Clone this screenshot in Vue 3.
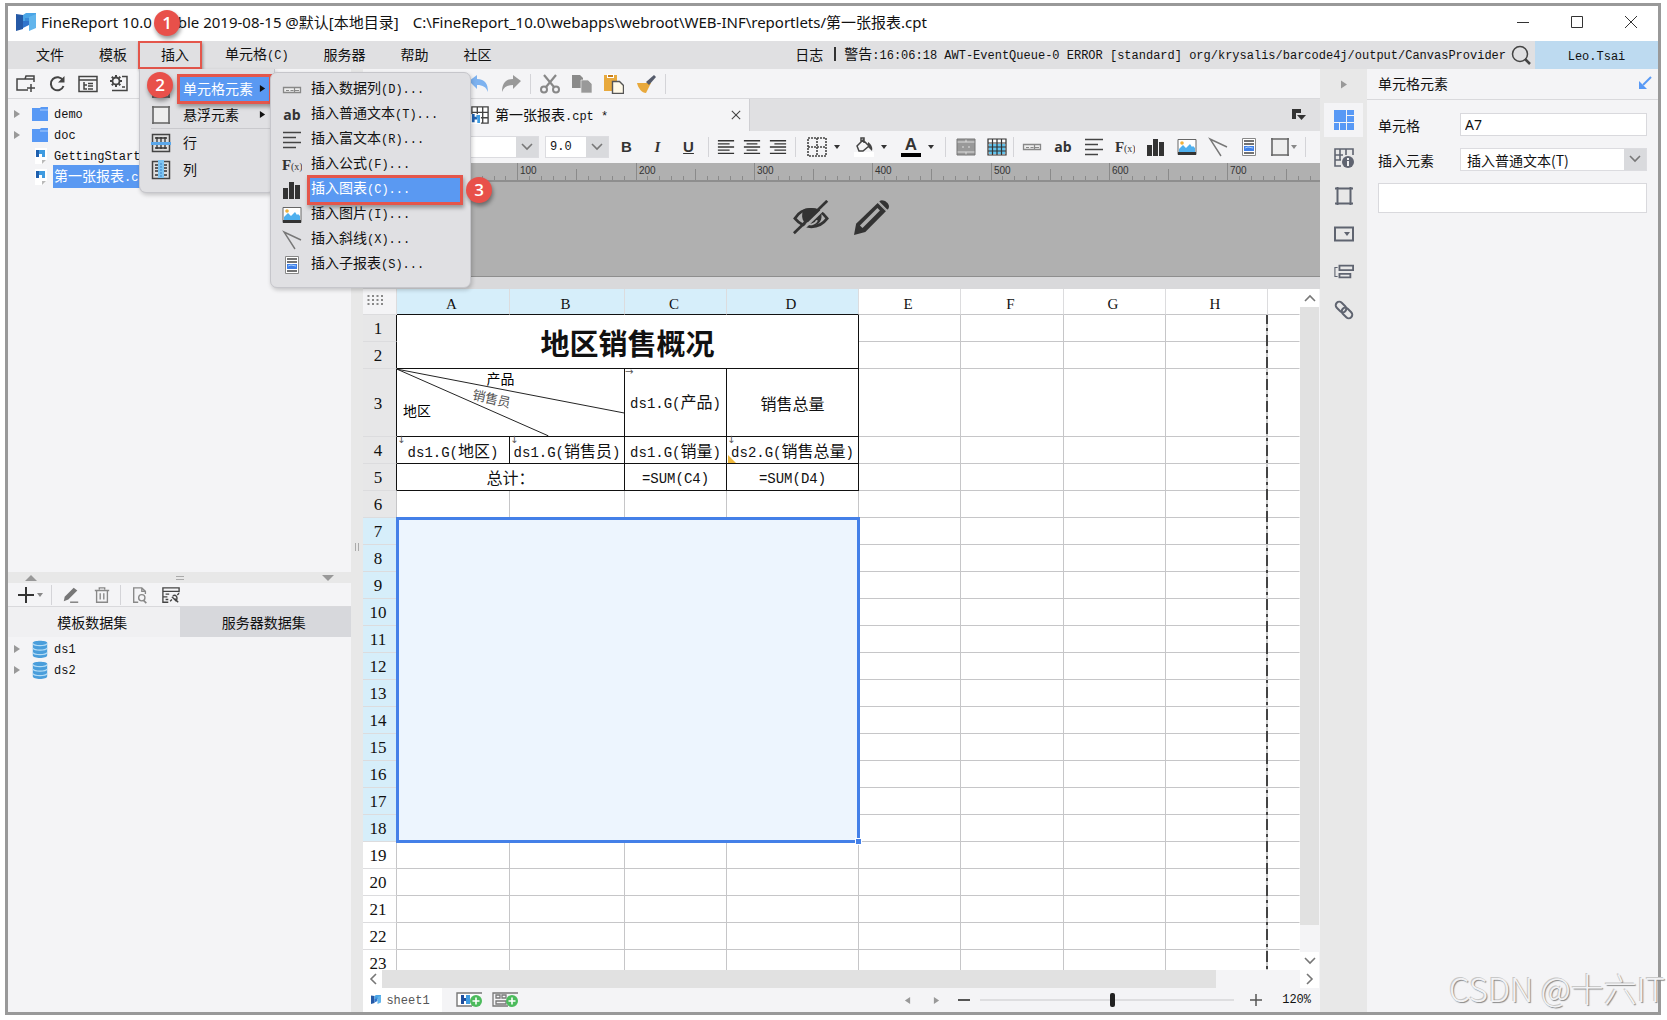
<script setup>
import { h, ref } from 'vue'

// Sets the Latin runs of a mixed label in the monospaced face, one size below the Chinese text
const Mix = (props) =>
  h(
    'span',
    { class: 'mix' },
    props.t.split(/([\x20-\x7e]+)/).filter(Boolean).map((run) =>
      /^[\x20-\x7e]/.test(run) ? h('span', { class: 'lat' }, run) : run
    )
  )
Mix.props = ['t']

const menus = ['文件', '模板', '插入', '单元格(C)', '服务器', '帮助', '社区']

const insertItems = [
  { icon: 'field', t: '插入数据列(D)...' },
  { icon: 'ab', t: '插入普通文本(T)...' },
  { icon: 'rich', t: '插入富文本(R)...' },
  { icon: 'fx', t: '插入公式(F)...' },
  { icon: 'chart', t: '插入图表(C)...', active: true },
  { icon: 'image', t: '插入图片(I)...' },
  { icon: 'slash', t: '插入斜线(X)...' },
  { icon: 'sub', t: '插入子报表(S)...' }
]

const files = [
  { icon: 'folder', t: 'demo', open: true },
  { icon: 'folder', t: 'doc', open: true },
  { icon: 'file', t: 'GettingStarted.cpt' },
  { icon: 'file', t: '第一张报表.cpt', active: true }
]

const columns = ['A', 'B', 'C', 'D', 'E', 'F', 'G', 'H']
const rail = ['cellel', 'cellattr', 'float', 'widget', 'cond', 'link']
const insertTools = ['field', 'ab', 'rich', 'fx', 'chart', 'image', 'slash', 'sub', 'box']

const ruler = []
for (let i = 1; i < 79; i++) {
  const x = Math.round(36 + i * 11.83)
  ruler.push({ x, y: i % 10 === 0 ? 0 : i % 5 === 0 ? 6 : 13, label: i % 10 === 0 ? i * 10 : '' })
}

const zoom = ref(52)
const cell = ref('A7')
const content = ref('')
</script>

<template>
  <svg class="defs" aria-hidden="true">
    <symbol id="logo" viewBox="0 0 20 20">
      <path d="M0 2l7 1v14l-7 2z" fill="#2559a6" />
      <path d="M7 9h6v4l-6 3z" fill="#2f74cc" />
      <path d="M7 3l3-2h10v3l-7 5H7z" fill="#4aa5e6" />
      <path d="M13 5l7-3v14l-7 3z" fill="#62b5ec" />
      <path d="M9 6h4v3H9z" fill="#3a8bd8" />
    </symbol>
    <symbol id="newfolder" viewBox="0 0 20 20">
      <path d="M12 16H1V5h8l1-3h8v6M9 5h9M15 10v8M11 14h8" fill="none" stroke="#444" stroke-width="1.5" />
    </symbol>
    <symbol id="refresh" viewBox="0 0 20 20">
      <path d="M16 6.500A6.500 6.500 0 1 0 16.500 12" fill="none" stroke="#444" stroke-width="2" />
      <path d="M17.500 2v6.500H11z" fill="#444" />
    </symbol>
    <symbol id="tree" viewBox="0 0 20 20">
      <path d="M1 2.500h18v15H1zM1 6h18M6 8v7h3M6 11h3M10 9.500h5M10 12h5M10 15h5" fill="none" stroke="#444" stroke-width="1.500" />
    </symbol>
    <symbol id="gear" viewBox="0 0 20 20">
      <circle cx="7" cy="7" r="3.500" fill="none" stroke="#444" stroke-width="1.800" />
      <path d="M7 1v2M7 11v2M1 7h2M11 7h2M2.800 2.800l1.500 1.500M9.800 9.800l1.500 1.500M2.800 11.200l1.500-1.500M9.800 4.200l1.500-1.500" stroke="#444" stroke-width="2" />
      <path d="M13 2.500h5v14H3M13 13h3" fill="none" stroke="#444" stroke-width="1.500" />
    </symbol>
    <symbol id="folder" viewBox="0 0 18 16">
      <path d="M1 2h8l1-1h7v14H1z" fill="#5899f5" />
      <path d="M9 4h8" stroke="#a9ccfb" />
    </symbol>
    <symbol id="file" viewBox="0 0 18 18">
      <path d="M4 1h12v11l-4 5H4z" fill="#fff" />
      <path d="M5 3h3v7H5z" fill="#1f5fae" />
      <path d="M8 3h6v7h-3V7H8z" fill="#3f9be0" />
      <path d="M11 17v-4h4z" fill="#b9b9b9" />
    </symbol>
    <symbol id="db" viewBox="0 0 18 20">
      <path d="M1 3v14c0 4 16 4 16 0V3c0-3-16-3-16 0z" fill="#4a9edb" />
      <path d="M1 4c2 3 14 3 16 0M1 9c2 3 14 3 16 0M1 14c2 3 14 3 16 0" fill="none" stroke="#b5ddf6" stroke-width="1.200" />
    </symbol>
    <symbol id="field" viewBox="0 0 20 20">
      <path d="M1.500 7.500h17v5h-17z" fill="#eee" stroke="#888" stroke-width="1.300" />
      <path d="M4 10.500h3M8.500 10.500h3M13 10.500h4M12.500 8v4" fill="none" stroke="#888" stroke-width="1.200" />
    </symbol>
    <symbol id="ab" viewBox="0 0 20 20">
      <text x="10" y="15" text-anchor="middle" font-family="Open Sans, sans-serif" font-weight="700" font-size="14" fill="#333">ab</text>
    </symbol>
    <symbol id="rich" viewBox="0 0 20 20">
      <path d="M1 2.500h18M1 7.500h13M1 12.500h18M1 17.500h13" stroke="#444" stroke-width="1.600" />
    </symbol>
    <symbol id="fx" viewBox="0 0 20 20">
      <text x="0" y="15" font-family="Liberation Serif, serif" font-weight="700" font-size="15" fill="#333">F</text>
      <text x="9" y="15" font-family="Liberation Serif, serif" font-size="10" fill="#333">(x)</text>
    </symbol>
    <symbol id="chart" viewBox="0 0 20 20">
      <path d="M1 8h5v11H1zM7 2h5v17H7zM13 5h5v14h-5z" fill="#333" />
    </symbol>
    <symbol id="image" viewBox="0 0 20 20">
      <path d="M1 2.500h18v15H1z" fill="#fff" stroke="#666" />
      <circle cx="5" cy="6" r="1.800" fill="#f0b23c" />
      <path d="M2 15v-3l4-4 3 3 4-4 2 3 1-1 2 2v4z" fill="#4fb0ee" />
      <path d="M1 15h18v3H1z" fill="#333" />
    </symbol>
    <symbol id="slash" viewBox="0 0 20 20">
      <path d="M19 10L2 2l11 17" fill="none" stroke="#777" stroke-width="1.400" />
    </symbol>
    <symbol id="sub" viewBox="0 0 20 20">
      <path d="M3.500 1.500h13v17h-13z" fill="#fff" stroke="#888" />
      <path d="M5 4h10M5 7h10M5 16h10" stroke="#444" stroke-width="1.400" />
      <path d="M5 9h10v5H5z" fill="#3f7fe8" />
      <path d="M6 11l3-1 5 1" stroke="#a9d0fa" fill="none" />
    </symbol>
    <symbol id="box" viewBox="0 0 20 20">
      <path d="M3 3h14v14H3z" fill="#eee" />
      <path d="M2 1v18M18 1v18M1 2h18M1 18h18" stroke="#666" stroke-width="1.600" fill="none" />
    </symbol>
    <symbol id="rowi" viewBox="0 0 20 20">
      <path d="M1.500 1.500h17v17h-17z" fill="#ddd" stroke="#444" stroke-width="1.500" />
      <path d="M4 5h12M4 15h12M6 4v12M10 4v12M14 4v12" stroke="#333" stroke-width="1.300" />
      <path d="M0 9h20v3H0z" fill="#5aa7ea" />
    </symbol>
    <symbol id="coli" viewBox="0 0 20 20">
      <path d="M1.500 1.500h17v17h-17z" fill="#ddd" stroke="#444" stroke-width="1.500" />
      <path d="M4 5h12M4 8h12M4 11h12M4 15h12" stroke="#333" stroke-width="1.300" />
      <path d="M7 0h6v18H7z" fill="#7cc4f2" /><path d="M10 3v14" stroke="#3c82c8" stroke-dasharray="2 1" />
    </symbol>
    <symbol id="undo" viewBox="0 0 20 20">
      <path d="M0 7l8-6v4c8 0 11 5 11 13-2-5-5-7-11-7v4z" fill="#7db2f0" />
    </symbol>
    <symbol id="redo" viewBox="0 0 20 20">
      <path d="M20 7l-8-6v4C4 5 1 10 1 18c2-5 5-7 11-7v4z" fill="#999" />
    </symbol>
    <symbol id="cut" viewBox="0 0 20 20">
      <path d="M4 1l10 12M16 1L6 13" stroke="#888" stroke-width="2.200" />
      <circle cx="4" cy="15.500" r="3" fill="none" stroke="#888" stroke-width="2" />
      <circle cx="16" cy="15.500" r="3" fill="none" stroke="#888" stroke-width="2" />
    </symbol>
    <symbol id="copy" viewBox="0 0 20 20">
      <path d="M0 1h8l3 3v10H0z" fill="#8a8a8a" />
      <path d="M9 6h7l4 4v9H9z" fill="#999" stroke="#eee" stroke-width=".7" />
    </symbol>
    <symbol id="paste" viewBox="0 0 20 20">
      <path d="M0 1h13v16H0z" fill="#e8a93c" /><path d="M3 0h7v4H3z" fill="#fff" /><path d="M4 1h5v2H4z" fill="#c77f1c" />
      <path d="M8.500 7.500h7l4 4v8h-11z" fill="#fff9e8" stroke="#555" stroke-width="1.400" />
    </symbol>
    <symbol id="brush" viewBox="0 0 20 20">
      <path d="M1 9h14l-5 10c-4 0-8-5-9-10z" fill="#e8a93c" />
      <path d="M10 8l8-7 2 2-7 8z" fill="#555b6b" />
    </symbol>
    <symbol id="left" viewBox="0 0 20 20"><path d="M1 3h18M1 6.500h13M1 10h18M1 13.500h13M1 17h18" stroke="#333" stroke-width="1.500" /></symbol>
    <symbol id="center" viewBox="0 0 20 20"><path d="M1 3h18M4 6.500h12M1 10h18M4 13.500h12M1 17h18" stroke="#333" stroke-width="1.500" /></symbol>
    <symbol id="right" viewBox="0 0 20 20"><path d="M1 3h18M6 6.500h13M1 10h18M6 13.500h13M1 17h18" stroke="#333" stroke-width="1.500" /></symbol>
    <symbol id="borders" viewBox="0 0 20 20">
      <path d="M1 1h18v18H1zM10 1v18M1 10h18" fill="none" stroke="#444" stroke-width="1.600" stroke-dasharray="2 1" />
    </symbol>
    <symbol id="fill" viewBox="0 0 20 20">
      <path d="M0 15h20v5H0z" fill="#fff" />
      <path d="M3 9l6-6 6 6-6 5H5zM7 5V1h3v5" fill="none" stroke="#444" stroke-width="1.500" />
      <path d="M14 5c3 2 5 5 4 9l-4-4z" fill="#444" />
    </symbol>
    <symbol id="fontcolor" viewBox="0 0 20 20">
      <path d="M0 16h20v4H0z" fill="#000" />
      <text x="10" y="13" text-anchor="middle" font-family="Liberation Sans, sans-serif" font-weight="700" font-size="17" fill="#333">A</text>
    </symbol>
    <symbol id="merge" viewBox="0 0 20 20">
      <path d="M1 2h18v16H1z" fill="#999" /><path d="M1 5h18M1 15h18M10 1v4M10 15v4" stroke="#ddd" />
      <path d="M1 2h18v16H1z" fill="none" stroke="#777" /><path d="M6 10h2M12 10h2" stroke="#ddd" />
    </symbol>
    <symbol id="unmerge" viewBox="0 0 20 20">
      <path d="M1 2h18v16H1z" fill="#fff" /><path d="M2 7h16v10H2z" fill="#62c4ee" />
      <path d="M1 2h18v16H1zM1 6h18M1 10h18M1 14h18M5.500 2v16M10 2v16M14.500 2v16" fill="none" stroke="#333" stroke-width="1.200" />
    </symbol>
    <symbol id="tabicon" viewBox="0 0 20 20">
      <path d="M1 1h18v18H1zM1 7h18M7 1v18M13 1v18M1 13h18" fill="#fff" stroke="#444" stroke-width="1.500" />
      <path d="M0 9h11v11H0z" fill="#fff" /><path d="M1 9h3v9H1zM4 12h3v3H4z" fill="#1f5fae" /><path d="M6 10h4v9H7v-6H6z" fill="#3f9be0" />
    </symbol>
    <symbol id="tablist" viewBox="0 0 16 14">
      <path d="M1 1h9v4H5v6H1z" fill="#333" /><path d="M6 7h9l-4.500 5z" fill="#333" />
    </symbol>
    <symbol id="eye" viewBox="0 0 40 38">
      <path d="M2 20C10 7 28 7 37 20 28 32 12 32 2 20z" fill="none" stroke="#333" stroke-width="3" />
      <path d="M11 11c-4 11 3 17 9 17 8 0 13-6 10-16-6-4-13-4-19-1z" fill="#333" />
      <path d="M14 24c3 4 10 3 12-2" fill="none" stroke="#b0b0b0" stroke-width="2" />
      <path d="M4 38L40 3" stroke="#b0b0b0" stroke-width="3" /><path d="M1 36L37 1" stroke="#333" stroke-width="3" />
    </symbol>
    <symbol id="bigpen" viewBox="0 0 36 36">
      <path d="M1 35l2-11L24 4l8 8-20 20z" fill="#333" />
      <path d="M26 2c3-3 12 3 8 8l-2 1-7-7z" fill="#333" /><path d="M25 3l8 8" stroke="#b0b0b0" stroke-width="1.500" />
      <path d="M8 27L25 10" stroke="#b0b0b0" stroke-width="3.500" />
    </symbol>
    <symbol id="pen" viewBox="0 0 20 20">
      <path d="M2 17l1-5L13 2l4 3L7 15z" fill="#777" /><path d="M9 18h9" stroke="#777" stroke-width="1.500" />
    </symbol>
    <symbol id="trash" viewBox="0 0 20 20">
      <path d="M2 5h16M7 4V2h6v2M4 5v13h12V5M8 8v7M12 8v7" fill="none" stroke="#888" stroke-width="1.500" />
    </symbol>
    <symbol id="preview" viewBox="0 0 20 20">
      <path d="M8 18H3V2h9l4 4v3M12 2v4h4" fill="none" stroke="#888" stroke-width="1.500" />
      <circle cx="12" cy="13" r="3.500" fill="none" stroke="#888" stroke-width="1.500" /><path d="M14 16l3 3" stroke="#888" stroke-width="1.800" />
    </symbol>
    <symbol id="conn" viewBox="0 0 20 20">
      <path d="M7 18H1V2h18v5M1 6h18M1 12h5M4 9h4M4 15h3" fill="none" stroke="#444" stroke-width="1.500" />
      <path d="M9 17l2-2M11 12l5 5M12 11c3-2 6 1 4 5M17 10l2-2M18 18l-4-4" fill="none" stroke="#444" stroke-width="1.500" />
    </symbol>
    <symbol id="search" viewBox="0 0 20 20">
      <circle cx="9" cy="9" r="7.500" fill="none" stroke="#444" stroke-width="1.500" /><path d="M14 14l5 5" stroke="#444" stroke-width="2.500" />
    </symbol>
    <symbol id="cellel" viewBox="0 0 20 20">
      <path d="M0 0h12v12H0zM13 0h7v5h-7zM13 6h7v6h-7zM0 13h5v7H0zM6 13h6v7H6zM13 13h7v7h-7z" fill="#5899f5" />
    </symbol>
    <symbol id="cellattr" viewBox="0 0 20 20">
      <path d="M7 18H1V1h18v6M1 7h8M1 12h6M6 1v11M12 1v6" fill="none" stroke="#5f6470" stroke-width="1.600" />
      <circle cx="14" cy="14" r="6" fill="#5f6470" /><path d="M14 10v2M14 13v5" stroke="#fff" stroke-width="1.800" />
    </symbol>
    <symbol id="float" viewBox="0 0 20 20">
      <path d="M3.500 1v18M16.500 1v18M1 2.500h18M1 17.500h18" stroke="#5f6470" stroke-width="2" />
    </symbol>
    <symbol id="widget" viewBox="0 0 20 20">
      <path d="M1 3.500h18v13H1z" fill="none" stroke="#5f6470" stroke-width="2" /><path d="M10 8h6l-3 4z" fill="#5f6470" />
    </symbol>
    <symbol id="cond" viewBox="0 0 22 20">
      <path d="M4 5H1v10h3" fill="none" stroke="#5f6470" stroke-width="1.200" />
      <path d="M6 3h15v5H6zM6 12h12v4H6z" fill="none" stroke="#5f6470" stroke-width="2" />
    </symbol>
    <symbol id="link" viewBox="0 0 20 20">
      <rect x="1" y="3.500" width="12" height="7" rx="3.500" transform="rotate(45 7 7)" fill="none" stroke="#5f6470" stroke-width="2" />
      <rect x="7" y="9.500" width="12" height="7" rx="3.500" transform="rotate(45 13 13)" fill="none" stroke="#5f6470" stroke-width="2" />
    </symbol>
    <symbol id="pin" viewBox="0 0 14 14">
      <path d="M13 1L5 9" stroke="#5899f5" stroke-width="2" /><path d="M1 5v8h8z" fill="#5899f5" />
    </symbol>
    <symbol id="addsheet" viewBox="0 0 27 16">
      <path d="M26 1H1v13h15" fill="#fff" stroke="#777" stroke-width="1.400" />
      <path d="M5 3h3v9H5zM8 6h3v3H8z" fill="#1f4f9e" /><path d="M10 3h4v9h-4z" fill="#3f9be0" />
      <circle cx="20" cy="9" r="6" fill="#4cbb5c" /><path d="M16.500 9h7M20 5.500v7" stroke="#fff" stroke-width="1.600" />
    </symbol>
    <symbol id="addform" viewBox="0 0 27 16">
      <path d="M26 1H1v13h15M4 3h4v3H4zM10 3h4v3h-4zM4 9h10v3H4z" fill="none" stroke="#777" stroke-width="1.300" />
      <circle cx="20" cy="9" r="6" fill="#4cbb5c" /><path d="M16.500 9h7M20 5.500v7" stroke="#fff" stroke-width="1.600" />
    </symbol>
    <symbol id="chev" viewBox="0 0 12 12"><path d="M1 3l5 5 5-5" fill="none" stroke="#777" stroke-width="1.600" /></symbol>
    <symbol id="tri" viewBox="0 0 8 8"><path d="M1 0l6 4-6 4z" fill="currentColor" /></symbol>
    <symbol id="caret" viewBox="0 0 8 8"><path d="M1 2h6L4 6z" fill="currentColor" /></symbol>
  </svg>

  <div class="desk">
    <div class="window">
      <header class="titlebar">
        <svg class="logo"><use href="#logo" /></svg>
        <span>FineReport 10.0 Stable 2019-08-15 @默认[本地目录]</span>
        <span class="path">C:\FineReport_10.0\webapps\webroot\WEB-INF\reportlets/第一张报表.cpt</span>
        <div class="winbtns">
          <button aria-label="最小化"><svg viewBox="0 0 14 14"><path d="M1 7.500h12" stroke="#333" /></svg></button>
          <button aria-label="最大化"><svg viewBox="0 0 14 14"><path d="M1.500 1.500h11v11h-11z" fill="none" stroke="#333" /></svg></button>
          <button aria-label="关闭"><svg viewBox="0 0 14 14"><path d="M1 1l12 12M13 1L1 13" stroke="#333" /></svg></button>
        </div>
      </header>

      <nav class="menubar">
        <button v-for="(m, i) in menus" :key="m" :class="{ marked: i === 2 }"><Mix :t="m" /></button>
        <div class="log">
          <span>日志</span><i></i><Mix t="警告:16:06:18 AWT-EventQueue-0 ERROR [standard] org/krysalis/barcode4j/output/CanvasProvider" />
        </div>
        <button class="find" aria-label="搜索"><svg class="ic"><use href="#search" /></svg></button>
        <button class="user"><Mix t="Leo.Tsai" /></button>
      </nav>

      <main class="body">
        <aside class="left">
          <section class="files">
            <div class="bar">
              <button v-for="n in ['newfolder', 'refresh', 'tree', 'gear']" :key="n" :aria-label="n"><svg class="ic"><use :href="'#' + n" /></svg></button>
            </div>
            <ul class="list">
              <li v-for="f in files" :key="f.t" :class="{ active: f.active }">
                <svg class="tw"><use v-if="f.open" href="#tri" /></svg>
                <svg class="node"><use :href="'#' + f.icon" /></svg>
                <Mix :t="f.t" />
              </li>
            </ul>
          </section>
          <div class="hsplit">
            <svg viewBox="0 0 12 6"><path d="M0 6h12L6 0z" fill="#999" /></svg>
            <svg viewBox="0 0 12 6"><path d="M2 1.500h8M2 4.500h8" stroke="#aaa" /></svg>
            <svg viewBox="0 0 12 6"><path d="M0 0h12L6 6z" fill="#999" /></svg>
          </div>
          <section class="data">
            <div class="bar small">
              <button aria-label="添加" class="add"><svg class="ic" viewBox="0 0 20 20"><path d="M10 2v16M2 10h16" stroke="#333" stroke-width="2" /></svg><svg class="car"><use href="#caret" /></svg></button>
              <i class="sep"></i>
              <button aria-label="编辑"><svg class="ic"><use href="#pen" /></svg></button>
              <button aria-label="删除"><svg class="ic"><use href="#trash" /></svg></button>
              <i class="sep"></i>
              <button aria-label="预览"><svg class="ic"><use href="#preview" /></svg></button>
              <button aria-label="连接"><svg class="ic"><use href="#conn" /></svg></button>
            </div>
            <div class="dtabs"><button class="on">模板数据集</button><button>服务器数据集</button></div>
            <ul class="list">
              <li v-for="d in ['ds1', 'ds2']" :key="d">
                <svg class="tw"><use href="#tri" /></svg>
                <svg class="node"><use href="#db" /></svg>
                <Mix :t="d" />
              </li>
            </ul>
          </section>
        </aside>
        <div class="vsplit"><svg viewBox="0 0 6 8"><path d="M1.500 0v8M4.500 0v8" stroke="#aaa" /></svg></div>

        <section class="center">
          <div class="bar edit">
            <button aria-label="撤销"><svg class="ic"><use href="#undo" /></svg></button>
            <button aria-label="重做"><svg class="ic"><use href="#redo" /></svg></button>
            <i class="sep"></i>
            <button v-for="n in ['cut', 'copy', 'paste', 'brush']" :key="n" :aria-label="n"><svg class="ic"><use :href="'#' + n" /></svg></button>
            <i class="sep"></i>
          </div>
          <div class="tabs">
            <div class="tab">
              <svg class="ic"><use href="#tabicon" /></svg>
              <Mix t="第一张报表.cpt *" />
              <button aria-label="关闭标签"><svg viewBox="0 0 12 12"><path d="M1 1l10 10M11 1L1 11" stroke="#444" stroke-width="1.300" /></svg></button>
            </div>
            <button class="tablist" aria-label="标签列表"><svg><use href="#tablist" /></svg></button>
          </div>
          <div class="format">
            <div class="combo face"><select aria-label="字体"><option></option></select><svg><use href="#chev" /></svg></div>
            <div class="combo size"><select aria-label="字号"><option>9.0</option></select><svg><use href="#chev" /></svg></div>
            <button class="b31 bold">B</button><button class="b31 ital">I</button><button class="b31 under">U</button>
            <i class="sep"></i>
            <button v-for="n in ['left', 'center', 'right']" :key="n" class="b26" :aria-label="n"><svg class="ic"><use :href="'#' + n" /></svg></button>
            <i class="sep"></i>
            <button v-for="n in ['borders', 'fill', 'fontcolor']" :key="n" class="b47" :aria-label="n"><svg class="ic"><use :href="'#' + n" /></svg><svg class="car"><use href="#caret" /></svg></button>
            <i class="sep"></i>
            <button v-for="n in ['merge', 'unmerge']" :key="n" class="b31" :aria-label="n"><svg class="ic"><use :href="'#' + n" /></svg></button>
            <i class="sep tight"></i>
            <button v-for="n in insertTools" :key="n" class="b31" :aria-label="n"><svg class="ic"><use :href="'#' + n" /></svg></button>
            <svg class="car grey"><use href="#caret" /></svg>
            <i class="sep"></i>
          </div>
          <svg class="ruler">
            <g v-for="r in ruler" :key="r.x">
              <line :x1="r.x + 0.5" :x2="r.x + 0.5" :y1="r.y" y2="18" stroke="#8a8a8a" />
              <text v-if="r.label" :x="r.x + 3" y="11">{{ r.label }}</text>
            </g>
          </svg>
          <div class="param">
            <svg viewBox="0 0 40 38"><use href="#eye" /></svg>
            <svg viewBox="0 0 36 36"><use href="#bigpen" /></svg>
          </div>
          <div class="strip"></div>

          <div class="gridarea">
            <div class="sheet">
              <table>
                <colgroup>
                  <col class="cn" /><col class="ca" /><col class="cb" /><col class="cc" /><col class="cd" /><col class="cc" /><col class="cf" /><col class="cc" /><col class="cc" /><col />
                </colgroup>
                <thead>
                  <tr>
                    <td class="corner"><svg viewBox="0 0 16 12"><path d="M1.500 0v12M6 0v12M10.500 0v12M15 0v12" stroke="#888" stroke-width="2" stroke-dasharray="2 2" /></svg></td>
                    <th v-for="(c, i) in columns" :key="c" :class="{ sel: i < 4 }">{{ c }}</th>
                    <th></th>
                  </tr>
                </thead>
                <tbody>
                  <tr>
                    <th class="used k">1</th>
                    <td class="k title" colspan="4" rowspan="2">地区销售概况</td>
                    <td v-for="n in 5" :key="n"></td>
                  </tr>
                  <tr><th class="used k">2</th><td v-for="n in 5" :key="n"></td></tr>
                  <tr class="tall">
                    <th class="used k">3</th>
                    <td class="k diag" colspan="2">
                      <svg viewBox="0 0 228 67">
                        <path d="M0 0L228 44M0 0L152 67" stroke="#222" fill="none" />
                        <text x="90" y="15">产品</text>
                        <text x="75" y="30" transform="rotate(13 75 30)" class="thin">销售员</text>
                        <text x="6" y="47">地区</text>
                      </svg>
                    </td>
                    <td class="k across"><Mix t="ds1.G(产品)" /></td>
                    <td class="k">销售总量</td>
                    <td v-for="n in 5" :key="n"></td>
                  </tr>
                  <tr class="low">
                    <th class="used k">4</th>
                    <td class="k down"><Mix t="ds1.G(地区)" /></td>
                    <td class="k down"><Mix t="ds1.G(销售员)" /></td>
                    <td class="k"><Mix t="ds1.G(销量)" /></td>
                    <td class="k down note"><Mix t="ds2.G(销售总量)" /></td>
                    <td v-for="n in 5" :key="n"></td>
                  </tr>
                  <tr>
                    <th class="used k">5</th>
                    <td class="k" colspan="2">总计：</td>
                    <td class="k"><Mix t="=SUM(C4)" /></td>
                    <td class="k"><Mix t="=SUM(D4)" /></td>
                    <td v-for="n in 5" :key="n"></td>
                  </tr>
                  <tr><th class="used">6</th><td v-for="n in 9" :key="n"></td></tr>
                  <tr v-for="r in 12" :key="r">
                    <th class="sel">{{ r + 6 }}</th>
                    <td v-if="r === 1" class="picked" colspan="4" rowspan="12"><i></i></td>
                    <td v-for="n in 5" :key="n"></td>
                  </tr>
                  <tr v-for="r in 5" :key="r"><th>{{ r + 18 }}</th><td v-for="n in 9" :key="n"></td></tr>
                </tbody>
              </table>
              <div class="pagebreak"></div>
            </div>
            <div class="vscroll">
              <button aria-label="向上"><svg class="up"><use href="#chev" /></svg></button>
              <div class="vt"></div>
              <button aria-label="向下"><svg><use href="#chev" /></svg></button>
            </div>
          </div>
          <div class="hscroll">
            <button aria-label="向左"><svg class="lf"><use href="#chev" /></svg></button>
            <div class="ht"></div>
            <button aria-label="向右"><svg class="rt"><use href="#chev" /></svg></button>
          </div>
          <footer class="status">
            <button class="sheettab"><svg><use href="#logo" /></svg><Mix t="sheet1" /></button>
            <button class="addb" aria-label="新建表单"><svg><use href="#addsheet" /></svg></button>
            <button class="addb" aria-label="新建决策报表"><svg><use href="#addform" /></svg></button>
            <div class="zoom">
              <svg class="nav flip"><use href="#tri" /></svg>
              <svg class="nav"><use href="#tri" /></svg>
              <button aria-label="缩小"><svg viewBox="0 0 12 12"><path d="M0 6h12" stroke="#555" stroke-width="2" /></svg></button>
              <input v-model="zoom" type="range" min="0" max="100" aria-label="缩放" />
              <button aria-label="放大"><svg viewBox="0 0 12 12"><path d="M0 6h12M6 0v12" stroke="#555" stroke-width="1.500" /></svg></button>
              <span>120%</span>
            </div>
          </footer>
        </section>

        <nav class="rail">
          <div class="fold"><svg><use href="#tri" /></svg></div>
          <button v-for="(n, i) in rail" :key="n" :class="{ on: i === 0 }" :aria-label="n"><svg class="ic"><use :href="'#' + n" /></svg></button>
        </nav>

        <aside class="props">
          <h2>单元格元素<svg><use href="#pin" /></svg></h2>
          <form @submit.prevent>
            <div class="row"><label for="cell">单元格</label><input id="cell" v-model="cell" /></div>
            <div class="row">
              <label for="kind">插入元素</label>
              <div class="combo kind"><select id="kind"><option>插入普通文本(T)</option></select><svg><use href="#chev" /></svg></div>
            </div>
            <input v-model="content" class="content" aria-label="内容" />
          </form>
        </aside>
      </main>

      <div class="menu first">
        <ul>
          <li><svg class="ic"><use href="#box" /></svg><button class="hot">单元格元素<svg class="tr"><use href="#tri" /></svg></button></li>
          <li><svg class="ic"><use href="#box" /></svg><button>悬浮元素<svg class="tr"><use href="#tri" /></svg></button></li>
          <li class="line"><svg class="ic"><use href="#rowi" /></svg><button>行</button></li>
          <li><svg class="ic"><use href="#coli" /></svg><button>列</button></li>
        </ul>
      </div>
      <div class="menu second">
        <ul>
          <li v-for="it in insertItems" :key="it.t">
            <svg class="ic"><use :href="'#' + it.icon" /></svg><button :class="{ hot: it.active }"><Mix :t="it.t" /></button>
          </li>
        </ul>
      </div>
      <span class="badge one">1</span>
      <span class="badge two">2</span>
      <span class="badge three">3</span>
    </div>
    <div class="watermark">CSDN @十六IT</div>
  </div>
</template>

<style>
body { background: #fff; }
.lat { font-family: "Liberation Mono", monospace; font-size: 12px; white-space: pre; }
.mix { white-space: nowrap; }
</style>

<style scoped>
* { box-sizing: border-box; }
.defs { display: none; }
.desk { position: relative; height: 100vh; padding: 3px 6px 5px 5px; overflow: hidden; color: #111; font: 14px/20px "Noto Sans CJK SC", sans-serif; }
.window { position: relative; height: 100%; border: 3px solid #999; background: #f4f4f6; display: flex; flex-direction: column; }
button { border: 0; padding: 0; margin: 0; background: none; font: inherit; color: inherit; display: flex; align-items: center; justify-content: center; flex: none; }
svg { flex: none; display: block; }
svg.defs { display: none; }
ul { list-style: none; margin: 0; padding: 0; }
.ic { width: 20px; height: 20px; }
.car { width: 8px; height: 8px; color: #222; }
.sep { width: 1px; height: 20px; background: #d4d4d8; flex: none; }

.titlebar { height: 35px; flex: none; background: #fff; display: flex; align-items: center; padding: 0 13px 4px 8px; font-family: "Noto Sans", "Noto Sans CJK SC", sans-serif; font-size: 15px; white-space: pre; }
.logo { width: 20px; height: 20px; margin-right: 5px; }
.path { margin-left: 14px; }
.winbtns { margin-left: auto; display: flex; gap: 26px; }
.winbtns button { width: 28px; height: 28px; }
.winbtns svg { width: 14px; height: 14px; }

.menubar { height: 28px; flex: none; background: #e0e0e2; display: flex; align-items: stretch; gap: 1px; padding-left: 11px; }
.menubar button { padding: 0 15px 2px; border: 2px solid transparent; }
.menubar .marked { border-color: #e4564b; box-shadow: 1px 2px 3px #0005; margin: 0 5px 0 -7px; padding: 0 11px 2px 21px; }
.log { margin-left: auto; display: flex; align-items: center; white-space: nowrap; padding-bottom: 2px; }
.log i { width: 2px; height: 14px; background: #333; margin: 0 8px 0 11px; }
.menubar .find { width: 27px; padding: 0 0 0 1px; }
.menubar .user { width: 123px; background: #bddaf0; padding: 0; border: 0; }

.body { flex: 1; min-height: 0; display: flex; }
.left { width: 343px; flex: none; display: flex; flex-direction: column; }
.files { flex: 503 1 0; min-height: 0; overflow: hidden; }
.data { flex: 429 1 0; min-height: 0; overflow: hidden; }
.bar { height: 30px; border-bottom: 1px solid #d9d9dc; display: flex; align-items: center; padding-left: 2px; flex: none; }
.bar button { width: 31px; height: 28px; }
.bar.small { height: 24px; padding-left: 0; }
.bar.small button { height: 22px; }
.bar.small .add { width: 40px; padding-left: 4px; }
.bar.small .sep { margin: 0 3px; }
.bar.small .ic { width: 18px; height: 18px; }
.bar.small .add .ic { width: 20px; height: 20px; }
.car { color: #333; }
.bar .car { color: #888; }
.list { padding: 4px 0 0 5px; }
.list li { height: 21px; display: flex; align-items: center; }
.list .tw { width: 8px; height: 10px; color: #999; }
.list .node { width: 18px; height: 18px; margin: 0 4px 0 10px; }
.list .mix { padding: 0 1px; }
.list .active .mix { background: #5a99f2; color: #fff; }
.data .list { padding-top: 1px; }
.hsplit { height: 11px; flex: none; background: #e8e8e8; display: flex; align-items: center; justify-content: space-between; padding: 0 17px; }
.hsplit svg { width: 12px; height: 6px; }
.dtabs { display: flex; height: 30px; }
.dtabs button { flex: 1; background: #d7d8dc; padding-right: 3px; }
.dtabs .on { background: #f0f0f2; }
.vsplit { width: 12px; flex: none; background: #e8e8e8; display: flex; align-items: center; justify-content: center; padding-top: 12px; }
.vsplit svg { width: 6px; height: 8px; }

.center { flex: 1; min-width: 0; display: flex; flex-direction: column; }
.edit { padding-left: 100px; }
.edit button { width: 32px; }
.edit .sep { margin: 0 3px; }
.tabs { height: 32px; flex: none; background: #e0e0e2; display: flex; align-items: stretch; justify-content: space-between; }
.tab { width: 387px; background: #f4f4f6; border-right: 1px solid #cfcfd3; display: flex; align-items: center; padding: 0 6px 0 108px; }
.tab .ic { width: 18px; height: 18px; margin-right: 6px; }
.tab button { margin-left: auto; width: 14px; height: 20px; }
.tab button svg { width: 10px; height: 10px; }
.tablist { width: 42px; }
.tablist svg { width: 16px; height: 14px; }

.format { height: 32px; flex: none; display: flex; align-items: center; padding-left: 4px; overflow: hidden; }
.combo { position: relative; height: 22px; background: #fff; border: 1px solid #dcdce0; }
.combo select { appearance: none; border: 0; width: 100%; height: 20px; padding: 0 24px 0 4px; background: linear-gradient(#d9dadd, #d9dadd) right / 22px 100% no-repeat #fff; font: 12px "Liberation Mono", monospace; color: #111; display: block; }
.combo svg { position: absolute; right: 5px; top: 4px; width: 12px; height: 12px; pointer-events: none; }
.face { width: 172px; margin-right: 6px; }
.size { width: 64px; margin-right: 2px; }
.format .sep { margin: 0 4px; }
.format .tight { margin: 0 2px 0 1px; }
.b31 { width: 31px; height: 28px; }
.b26 { width: 26px; height: 28px; }
.b26 .ic { width: 18px; height: 18px; }
.b47 { width: 47px; height: 28px; gap: 6px; }
.bold, .ital, .under { font: 700 15px/18px "Liberation Sans", sans-serif; color: #333; }
.ital { font-family: "Liberation Serif", serif; font-style: italic; }
.under { text-decoration: underline; }
.format .grey { color: #888; margin: 0 3px 0 -5px; }

.ruler { height: 19px; width: 100%; background: #b0b0b0; border-bottom: 2px solid #8e8e8e; }
.ruler text { font: 10px "Liberation Sans", sans-serif; fill: #333; }
.param { height: 95px; flex: none; background: #b0b0b0; border-bottom: 1px solid #8e8e8e; display: flex; justify-content: center; gap: 23px; padding-top: 17px; }
.param svg { width: 37px; height: 37px; }
.strip { height: 12px; flex: none; background: #d9d9db; }

.gridarea { flex: 1; min-height: 0; display: flex; background: #fff; }
.sheet { flex: 1; min-width: 0; position: relative; overflow: hidden; }
table { width: 100%; table-layout: fixed; border-collapse: separate; border-spacing: 0; }
.cn { width: 34px; } .ca { width: 113px; } .cb { width: 115px; } .cc { width: 102px; } .cd { width: 132px; } .cf { width: 103px; }
tr { height: 27px; }
thead tr { height: 26px; }
.tall { height: 68px; }
td, th { padding: 0; border-right: 1px solid #c6c6c8; border-bottom: 1px solid #c6c6c8; text-align: center; vertical-align: middle; font-weight: 400; font-size: 16px; line-height: 20px; white-space: nowrap; position: relative; }
th { border-color: #dcdcde; border-right-color: #c6c6c8; padding: 2px 3px 0 0; font-family: "Liberation Serif", serif; font-size: 17px; }
thead th { font-size: 15px; border-right-color: #dcdcde; border-bottom-color: #c6c6c8; padding: 5px 3px 0 0; }
td:last-child, th:last-child { border-right-color: transparent; }
.corner { background: #f4f4f6; border-color: #dcdcde; }
.corner svg { width: 16px; height: 12px; margin: 0 0 2px 4px; }
.sel { background: #d6eefa; }
thead .sel { border-bottom-color: #111; }
.used { background: #e7e7e8; }
.k { border-right-color: #111; }
td.k { border-bottom-color: #111; }
.low td { padding-top: 2px; }
.title { font-size: 29px; font-weight: 700; line-height: 40px; }
.sheet :deep(.lat) { font-size: 14px; }
.diag svg { width: 228px; height: 67px; max-width: 100%; }
.diag svg text { font-size: 14px; }
.diag svg .thin { font-size: 13px; fill: #555; }
.down::before, .across::before { content: "↓"; position: absolute; left: 0; top: -4px; font: 10px/14px "DejaVu Sans", sans-serif; color: #555; }
.across::before { content: "→"; }
.note::after { content: ""; position: absolute; left: 1px; bottom: 0; border: 4px solid transparent; border-left-color: #f0b93c; border-bottom-color: #f0b93c; }
.picked { background: #edf5fe; outline: 3px solid #4480e8; outline-offset: -2px; z-index: 1; }
.picked i { position: absolute; right: -4px; bottom: -4px; width: 7px; height: 7px; background: #4480e8; border: 1px solid #fff; z-index: 2; }
.pagebreak { position: absolute; left: 903px; top: 26px; bottom: 0; width: 2px; background: repeating-linear-gradient(#444 0 9px, #ccc 9px 13px, #444 13px 16px, #ccc 16px 20px, #444 20px 22px); }

.vscroll { width: 20px; flex: none; display: flex; flex-direction: column; background: #f4f4f6; padding-right: 1px; }
.vscroll button, .hscroll button { width: 19px; height: 18px; background: #fff; }
.vscroll svg, .hscroll svg { width: 12px; height: 12px; }
.vt { flex: 1; background: #e1e1e1; margin-bottom: 27px; }
.up { transform: rotate(180deg); } .lf { transform: rotate(90deg); } .rt { transform: rotate(-90deg); }
.hscroll { height: 18px; flex: none; display: flex; padding-right: 1px; }
.ht { flex: 1; background: #e1e1e1; margin-right: 84px; }

.status { height: 24px; flex: none; display: flex; align-items: center; }
.sheettab { background: #fff; height: 24px; width: 79px; padding: 0 4px 2px 0; gap: 5px; color: #555; }
.sheettab svg { width: 10px; height: 11px; }
.addb { margin-left: 9px; }
.sheettab + .addb { margin-left: 14px; }
.addb svg { width: 27px; height: 16px; }
.zoom { margin-left: auto; display: flex; align-items: center; padding-right: 9px; font: 12px "Liberation Mono", monospace; }
.zoom .nav { width: 7px; height: 9px; color: #999; margin-right: 22px; }
.zoom .nav + button { margin-left: -4px; }
.zoom .flip { transform: scaleX(-1); }
.zoom button svg { width: 12px; height: 12px; }
.zoom input { appearance: none; width: 254px; height: 20px; margin: 0 16px 0 10px; background: linear-gradient(#dedee0, #dedee0) center / 100% 2px no-repeat; }
.zoom input::-webkit-slider-thumb { appearance: none; width: 5px; height: 14px; border-radius: 2px; background: #222; }
.zoom span { margin-left: 20px; }

.rail { width: 47px; flex: none; background: #e8e8e8; display: flex; flex-direction: column; align-items: center; gap: 4px; }
.fold { height: 30px; display: flex; align-items: center; }
.fold svg { width: 8px; height: 11px; color: #999; }
.rail button { width: 39px; height: 34px; }
.rail .on { background: #f4f4f6; }
.props { width: 291px; flex: none; }
.props h2 { margin: 0; height: 31px; padding: 0 6px 2px 11px; border-bottom: 1px solid #d9d9dc; font-size: 14px; font-weight: 400; display: flex; align-items: center; justify-content: space-between; }
.props h2 svg { width: 14px; height: 14px; }
form { padding: 13px 11px 0; display: flex; flex-direction: column; gap: 12px; }
.row { display: flex; align-items: center; height: 23px; }
.row label { width: 82px; flex: none; }
form input { flex: 1; min-width: 0; height: 23px; border: 1px solid #d9d9dd; background: #fff; padding: 0 4px; font: 14px "Noto Sans", sans-serif; color: #111; }
.kind { flex: 1; height: 23px; }
.combo.kind select { height: 21px; padding-left: 6px; font: 14px "Noto Sans CJK SC", sans-serif; }
.content { flex: none; height: 30px; }

.menu { position: absolute; background: #e0e0e3; border: 1px solid #c6c6cb; border-radius: 0 0 7px 7px; box-shadow: 1px 2px 4px #0003; z-index: 5; }
.menu li { display: flex; align-items: center; height: 25px; }
.menu li button { height: 25px; flex: 1; justify-content: flex-start; padding: 0 6px 2px; }
.first { left: 131px; top: 63px; width: 136px; height: 124px; padding: 7px 2px 0 11px; border-top: 0; }
.first li { height: 26px; }
.first .ic { margin-right: 6px; }
.first .line { border-top: 1px solid #c9c9cd; height: 29px; }
.first .tr { margin-left: auto; width: 7px; height: 9px; color: #111; }
.second { left: 262px; top: 66px; width: 201px; height: 216px; border-radius: 7px; padding: 4px 7px 0 11px; }
.second .ic { margin-right: 5px; }
.second li button { padding: 0 4px 2px; }
.menu li .hot { height: 30px; background: #5a99f2; color: #fff; border: 3px solid #e4564b; padding: 0 3px 2px; box-shadow: 1px 3px 4px #0005; }
.second li .hot { padding: 0 1px 2px; }
.badge { position: absolute; z-index: 6; width: 26px; height: 26px; border-radius: 50%; background: #e8504a; color: #fff; text-align: center; font: 600 17px/26px "Open Sans", sans-serif; box-shadow: 1px 3px 4px #0006; }
.one { left: 146px; top: 4px; } .two { left: 139px; top: 66px; } .three { left: 458px; top: 171px; }
.watermark { position: absolute; right: 2px; bottom: 10px; font: 300 33px/44px "Noto Sans CJK SC", sans-serif; color: #f2f2f4; text-shadow: 1px 1px 1px #888, -1px -1px 0 #c8c8c8; z-index: 7; white-space: nowrap; pointer-events: none; }
</style>
